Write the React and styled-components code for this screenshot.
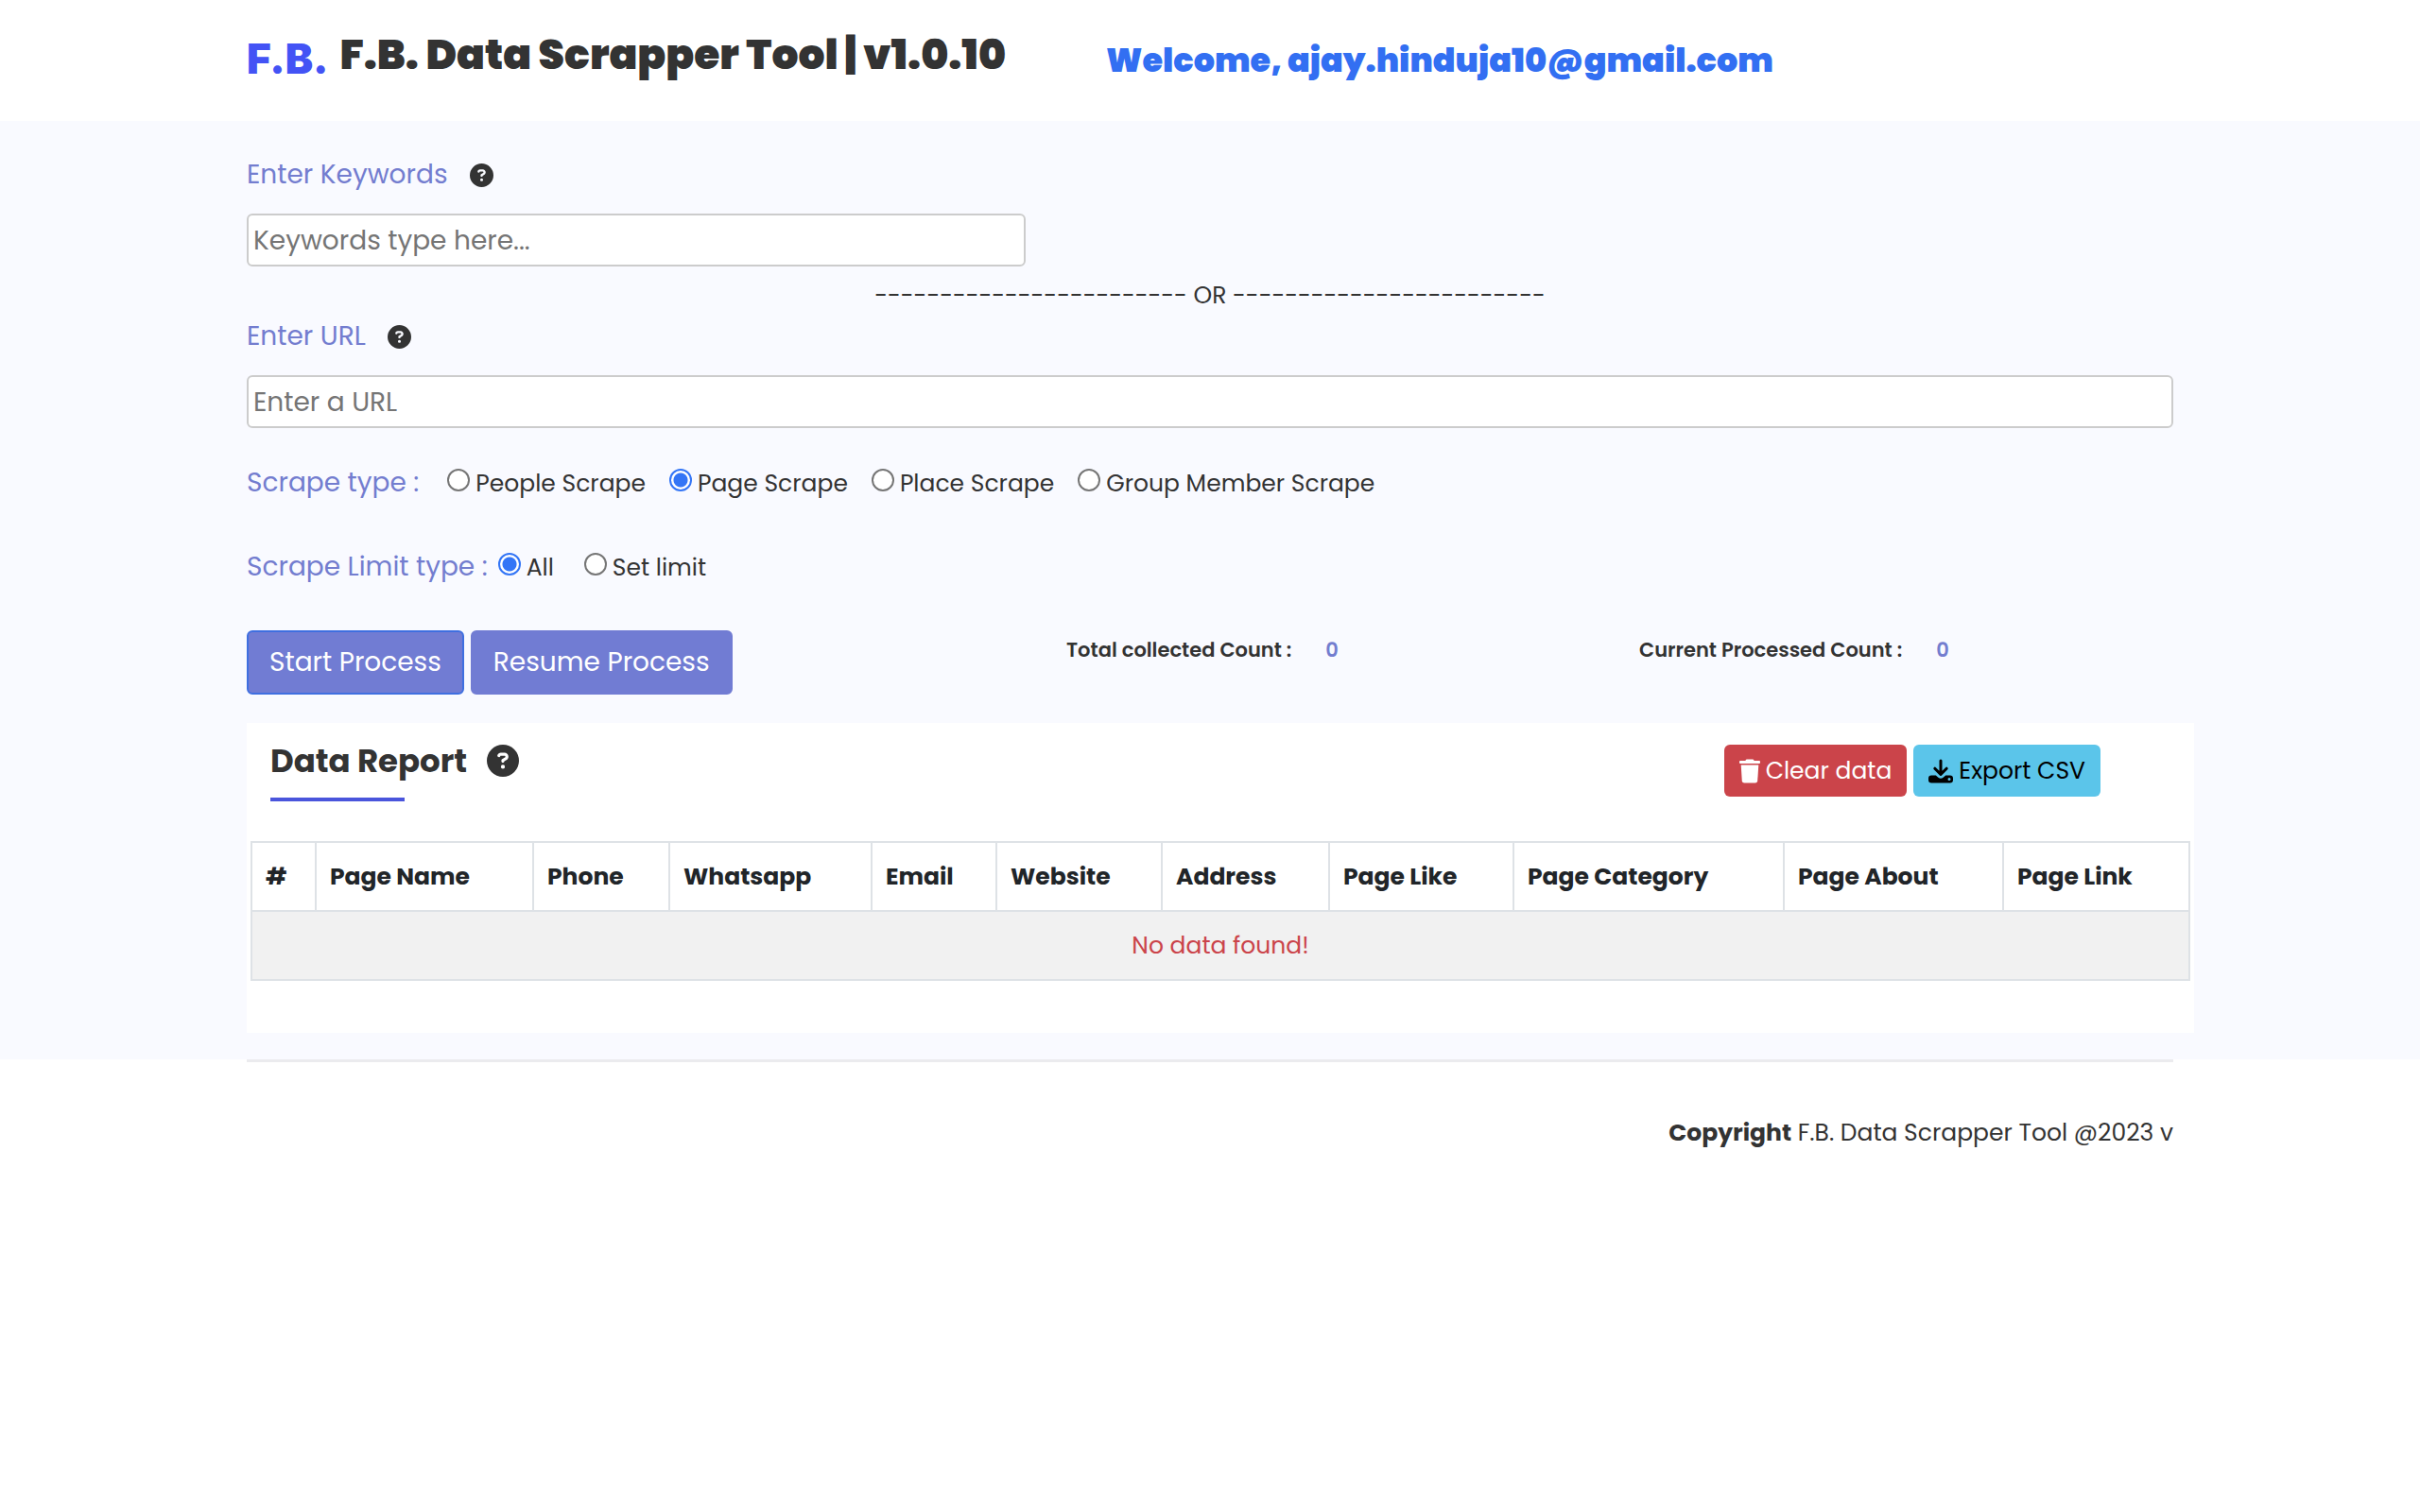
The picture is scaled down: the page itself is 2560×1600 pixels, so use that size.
import React, { useState } from "react";
import styled, { createGlobalStyle } from "styled-components";
import { FaCircleQuestion } from "react-icons/fa6";

const columns = [
  { name: "#", width: 68 },
  { name: "Page Name", width: 230 },
  { name: "Phone", width: 144 },
  { name: "Whatsapp", width: 214 },
  { name: "Email", width: 132 },
  { name: "Website", width: 175 },
  { name: "Address", width: 177 },
  { name: "Page Like", width: 195 },
  { name: "Page Category", width: 286 },
  { name: "Page About", width: 232 },
  { name: "Page Link", width: 197 },
];

const totalWidth = columns.reduce((sum, column) => sum + column.width, 0);

const scrapeTypes = ["People Scrape", "Page Scrape", "Place Scrape", "Group Member Scrape"];

const dashes = "-".repeat(24);

const TrashIcon = () => (
  <svg width="22" height="26" viewBox="0 0 22 26" fill="currentColor" aria-hidden="true">
    <path d="M8 0.500h6q1 0 1.400 1l.2.500h5.400q1 0 1 1v1q0 1-1 1h-20q-1 0-1-1v-1q0-1 1-1h5.400l.2-.5q.4-1 1.400-1z" />
    <path d="M1.700 6.500h18.600l-1.100 16.700q-.2 2.300-2.400 2.300h-11.600q-2.200 0-2.400-2.300z" />
  </svg>
);

const DownloadIcon = () => (
  <svg width="26" height="26" viewBox="0 0 26 26" fill="currentColor" aria-hidden="true">
    <path
      d="M13 2v14M6.800 10.200l6.200 6.200 6.200-6.200"
      fill="none"
      stroke="currentColor"
      strokeWidth="3"
      strokeLinecap="round"
      strokeLinejoin="round"
    />
    <path
      fillRule="evenodd"
      d="M3.200 17.500h4.600l2.600 2.300q2.600 2 5.200 0l2.600-2.300h4.600q3.200 0 3.200 3.200v1.600q0 3.200-3.200 3.200h-19.600q-3.200 0-3.200-3.200v-1.600q0-3.200 3.200-3.200zM22 20a1.500 1.500 0 1 0 0 3 1.500 1.500 0 0 0 0-3z"
    />
  </svg>
);

const App = () => {
  const [scrapeType, setScrapeType] = useState("Page Scrape");
  const [limitType, setLimitType] = useState("All");

  return (
    <>
      <GlobalStyle />
      <Header>
        <HeaderInner>
          <Logo>F.B.</Logo>
          <Title>F.B. Data Scrapper Tool | v1.0.10</Title>
          <Welcome>Welcome, ajay.hinduja10@gmail.com</Welcome>
        </HeaderInner>
      </Header>

      <Main>
        <Container>
          <FieldHead>
            <Label htmlFor="keywords">Enter Keywords</Label>
            <FaCircleQuestion size={25} />
          </FieldHead>
          <HalfInput id="keywords" type="text" placeholder="Keywords type here..." />

          <Divider>
            {dashes} OR {dashes}
          </Divider>

          <FieldHead>
            <Label htmlFor="url">Enter URL</Label>
            <FaCircleQuestion size={25} />
          </FieldHead>
          <TextInput id="url" type="text" placeholder="Enter a URL" />

          <RadioRow role="radiogroup" aria-labelledby="scrape-type">
            <RowLabel id="scrape-type" $gap={30}>Scrape type :</RowLabel>
            <Options $gap={25}>
              {scrapeTypes.map((type) => (
                <Option key={type}>
                  <Radio
                    type="radio"
                    name="scrapeType"
                    checked={scrapeType === type}
                    onChange={() => setScrapeType(type)}
                  />
                  {type}
                </Option>
              ))}
            </Options>
          </RadioRow>

          <RadioRow role="radiogroup" aria-labelledby="limit-type">
            <RowLabel id="limit-type" $gap={11}>Scrape Limit type :</RowLabel>
            <Options $gap={32}>
              {["All", "Set limit"].map((type) => (
                <Option key={type}>
                  <Radio
                    type="radio"
                    name="limitType"
                    checked={limitType === type}
                    onChange={() => setLimitType(type)}
                  />
                  {type}
                </Option>
              ))}
            </Options>
          </RadioRow>

          <ActionRow>
            <Buttons>
              <ProcessButton type="button" $active>Start Process</ProcessButton>
              <ProcessButton type="button">Resume Process</ProcessButton>
            </Buttons>
            <Count>
              Total collected Count : <CountValue>0</CountValue>
            </Count>
            <Count>
              Current Processed Count : <CountValue>0</CountValue>
            </Count>
          </ActionRow>

          <Report>
            <ReportHead>
              <ReportTitle>
                <span>Data Report</span>
                <FaCircleQuestion size={34} />
              </ReportTitle>
              <Buttons>
                <SmallButton type="button" $bg="#cb444a" $color="#fff">
                  <TrashIcon />
                  Clear data
                </SmallButton>
                <SmallButton type="button" $bg="#5bc5ea" $color="#000">
                  <DownloadIcon />
                  Export CSV
                </SmallButton>
              </Buttons>
            </ReportHead>
            <Table>
              <colgroup>
                {columns.map((column) => (
                  <col key={column.name} style={{ width: `${(column.width / totalWidth) * 100}%` }} />
                ))}
              </colgroup>
              <thead>
                <tr>
                  {columns.map((column) => (
                    <th key={column.name} scope="col">{column.name}</th>
                  ))}
                </tr>
              </thead>
              <tbody>
                <tr>
                  <td colSpan={columns.length}>No data found!</td>
                </tr>
              </tbody>
            </Table>
          </Report>
        </Container>
      </Main>

      <Footer>
        <strong>Copyright</strong> F.B. Data Scrapper Tool @2023 v
      </Footer>
    </>
  );
};

const GlobalStyle = createGlobalStyle`
  *,
  *::before,
  *::after {
    box-sizing: border-box;
  }
  body {
    margin: 0;
    background: #fff;
    color: #333;
    font-family: Poppins, Inter, "Liberation Sans", sans-serif;
    font-size: 25px;
    line-height: 40px;
  }
  button,
  input {
    font-family: inherit;
  }
`;

const Container = styled.div`
  max-width: 2038px;
  margin: 0 auto;
`;

const Header = styled.header`
  background: #fff;
`;

const HeaderInner = styled(Container)`
  display: flex;
  align-items: flex-start;
  height: 128px;
  padding-top: 28px;
`;

const Logo = styled.span`
  margin-right: 12px;
  color: #4353f5;
  font-family: Inter, "Liberation Sans", sans-serif;
  font-size: 44px;
  font-weight: 900;
  line-height: 68px;
`;

const Title = styled.h1`
  margin: 0 106px 0 0;
  font-size: 44px;
  font-weight: 900;
  line-height: 60px;
`;

const Welcome = styled.h2`
  margin: 0;
  color: #326ff2;
  font-size: 35px;
  font-weight: 900;
  line-height: 72px;
`;

const Main = styled.main`
  padding: 36px 0 28px;
  background: #f9faff;
`;

const FieldHead = styled.div`
  display: flex;
  align-items: center;
  gap: 23px;
  margin-bottom: 20px;
`;

const Label = styled.label`
  color: #737dcf;
  font-size: 28px;
  line-height: 42px;
`;

const TextInput = styled.input`
  display: block;
  width: 100%;
  height: 56px;
  padding: 1px 5px 0;
  border: 2px solid #ccc;
  border-radius: 6px;
  background: #fff;
  color: #333;
  font-size: 28px;

  &::placeholder {
    color: #757575;
    opacity: 1;
  }
`;

const HalfInput = styled(TextInput)`
  max-width: 824px;
`;

const Divider = styled.div`
  padding: 11px 0 2px;
  text-align: center;
`;

const RadioRow = styled.div`
  display: flex;
  align-items: baseline;
  margin-top: 37px;
  padding-bottom: 10px;
`;

const RowLabel = styled.span`
  margin-right: ${({ $gap }) => $gap}px;
  color: #737dcf;
  font-size: 28px;
  line-height: 42px;
`;

const Options = styled.div`
  display: flex;
  gap: ${({ $gap }) => $gap}px;
`;

const Option = styled.label`
  display: flex;
  align-items: baseline;
  gap: 6px;
`;

const Radio = styled.input`
  appearance: none;
  width: 24px;
  height: 24px;
  margin: 0;
  border: 2px solid ${({ checked }) => (checked ? "#3375f6" : "#767676")};
  border-radius: 50%;
  background: ${({ checked }) =>
    checked ? "radial-gradient(circle, #3375f6 7px, #fff 8px)" : "#fff"};
`;

const ActionRow = styled.div`
  display: grid;
  grid-template-columns: 867fr 606fr 565fr;
  align-items: start;
  margin-top: 36px;
`;

const Buttons = styled.div`
  display: flex;
  gap: 7px;
`;

const ProcessButton = styled.button`
  padding: 12px 22px;
  border: 2px solid ${({ $active }) => ($active ? "#3f6fe0" : "#717cd3")};
  border-radius: 6px;
  background: #717cd3;
  color: #fff;
  font-size: 28px;
  line-height: 40px;
`;

const Count = styled.div`
  font-size: 21px;
  font-weight: 600;
  line-height: 42px;
`;

const CountValue = styled.span`
  margin-left: 31px;
  color: #737dcf;
`;

const Report = styled.section`
  margin: 30px -22px 0 0;
  padding: 23px 4px 55px;
  background: #fff;
`;

const ReportHead = styled.div`
  display: flex;
  justify-content: space-between;
  align-items: flex-start;
  margin-bottom: 42px;
  padding: 0 95px 0 21px;
`;

const ReportTitle = styled.h3`
  display: grid;
  grid-template-columns: auto auto;
  align-items: center;
  gap: 22px 21px;
  margin: 0;
  font-size: 34px;
  font-weight: 700;
  line-height: 34px;

  &::after {
    content: "";
    width: 142px;
    height: 4px;
    background: #4a55dc;
  }
`;

const SmallButton = styled.button`
  display: flex;
  align-items: center;
  gap: 6px;
  padding: 8px 16px;
  border: 0;
  border-radius: 6px;
  background: ${({ $bg }) => $bg};
  color: ${({ $color }) => $color};
  font-size: 25px;
  line-height: 39px;
`;

const Table = styled.table`
  width: 100%;
  border-collapse: collapse;
  table-layout: fixed;
  color: #212529;
  line-height: 39px;

  th,
  td {
    padding: 16px 14px;
    border: 2px solid #dee2e6;
    text-align: left;
    white-space: nowrap;
  }
  th {
    font-weight: 700;
  }
  td {
    background: #f1f1f1;
    color: #cb444a;
    text-align: center;
  }
`;

const Footer = styled(Container).attrs({ as: "footer" })`
  padding-top: 55px;
  border-top: 3px solid #ebebee;
  text-align: right;
`;

export default App;
